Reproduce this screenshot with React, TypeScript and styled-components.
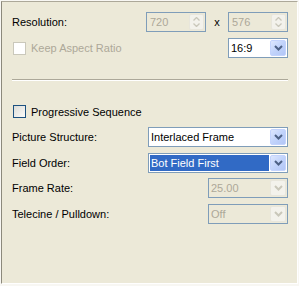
import React from 'react';
import styled, {createGlobalStyle} from 'styled-components';

const GlobalStyle = createGlobalStyle`
    html, body {
        margin: 0;
        padding: 0;
        background: #f8f7f3;
    }
    body {
        font-family: "Liberation Sans", Arial, sans-serif;
        font-size: 11px;
        color: #000;
    }
`

const Chevron = ({color}: {color: string}) => (
    <svg width="9" height="6" viewBox="0 0 9 6">
        <path d="M1 1 L4.5 4.5 L8 1" fill="none" stroke={color} strokeWidth="2"/>
    </svg>
)

const SpinArrow = ({up}: {up?: boolean}) => (
    <svg width="7" height="4" viewBox="0 0 7 4">
        <path d={up ? 'M0.5 3.5 L3.5 0.5 L6.5 3.5' : 'M0.5 0.5 L3.5 3.5 L6.5 0.5'} fill="none" stroke="#c9c7ba" strokeWidth="1.3"/>
    </svg>
)

type ComboProps = {
    value: string
    width: number
    disabled?: boolean
    selected?: boolean
}

const Combo = ({value, width, disabled, selected}: ComboProps) => (
    <StyledCombo $width={width} $disabled={disabled}>
        <ComboText $disabled={disabled} $selected={selected}>{value}</ComboText>
        <ComboButton $disabled={disabled}>
            <Chevron color={disabled ? '#c9c7ba' : '#4d6185'}/>
        </ComboButton>
    </StyledCombo>
)

const SpinBox = ({value}: {value: string}) => (
    <StyledSpin>
        <SpinText>{value}</SpinText>
        <SpinButtons>
            <SpinArrow up/>
            <SpinArrow/>
        </SpinButtons>
    </StyledSpin>
)

const App = () => {
    return (
        <>
            <GlobalStyle/>
            <Panel>
                <Row>
                    <Label>Resolution:</Label>
                    <SizeGroup>
                        <SpinBox value={'720'}/>
                        <Times>x</Times>
                        <SpinBox value={'576'}/>
                    </SizeGroup>
                </Row>
                <Row $top={6}>
                    <CheckLabel $disabled>
                        <CheckBox $disabled/>
                        Keep Aspect Ratio
                    </CheckLabel>
                    <Combo value={'16:9'} width={60}/>
                </Row>
                <Separator/>
                <CheckRow>
                    <CheckLabel>
                        <CheckBox/>
                        Progressive Sequence
                    </CheckLabel>
                </CheckRow>
                <Fields>
                    <Row>
                        <Label>Picture Structure:</Label>
                        <Combo value={'Interlaced Frame'} width={140}/>
                    </Row>
                    <Row>
                        <Label>Field Order:</Label>
                        <Combo value={'Bot Field First'} width={140} selected/>
                    </Row>
                    <Row>
                        <Label>Frame Rate:</Label>
                        <Combo value={'25.00'} width={80} disabled/>
                    </Row>
                    <Row>
                        <Label>Telecine / Pulldown:</Label>
                        <Combo value={'Off'} width={80} disabled/>
                    </Row>
                </Fields>
            </Panel>
        </>
    );
};

export default App;

const Panel = styled.div`
    box-sizing: border-box;
    margin: 1px 0 0 1px;
    width: 297px;
    height: 283px;
    background: #ece9d8;
    border-top: 1px solid #aca899;
    border-left: 1px solid #8c897c;
    border-right: 1px solid #fff;
    border-bottom: 1px solid #fff;
    padding: 10px 9px 0 10px;
`

const Row = styled.div<{$top?: number}>`
    display: flex;
    align-items: center;
    justify-content: space-between;
    height: 20px;
    margin-top: ${p => p.$top ?? 0}px;
`

const Label = styled.span`
    white-space: nowrap;
`

const SizeGroup = styled.div`
    display: flex;
    align-items: center;
`

const Times = styled.span`
    width: 22px;
    text-align: center;
    color: #000;
`

const CheckRow = styled.div`
    display: flex;
    align-items: center;
    height: 13px;
    margin-top: 24px;
`

const CheckLabel = styled.label<{$disabled?: boolean}>`
    display: flex;
    align-items: center;
    gap: 5px;
    padding-left: 1px;
    color: ${p => p.$disabled ? '#aca899' : '#000'};
`

const CheckBox = styled.span<{$disabled?: boolean}>`
    box-sizing: border-box;
    width: 13px;
    height: 13px;
    border: 1px solid ${p => p.$disabled ? '#cac8bb' : '#1c5180'};
    background: ${p => p.$disabled ? '#fff' : 'linear-gradient(135deg, #dcdcd7, #fbfbf9)'};
`

const Separator = styled.div`
    margin-top: 21px;
    border-top: 1px solid #aca899;
    border-bottom: 1px solid #fff;
`

const Fields = styled.div`
    display: flex;
    flex-direction: column;
    gap: 5.67px;
    margin-top: 9px;
`

const StyledCombo = styled.div<{$width: number, $disabled?: boolean}>`
    box-sizing: border-box;
    display: flex;
    width: ${p => p.$width}px;
    height: 20px;
    padding: 1px;
    border: 1px solid #7f9db9;
    background: ${p => p.$disabled ? '#ece9d8' : '#fff'};
`

const ComboText = styled.div<{$disabled?: boolean, $selected?: boolean}>`
    flex: 1;
    display: flex;
    align-items: center;
    padding-left: 1px;
    margin-right: 1px;
    white-space: nowrap;
    color: ${p => p.$selected ? '#fff' : p.$disabled ? '#aca899' : '#000'};
    background: ${p => p.$selected ? '#316ac5' : 'transparent'};
`

const ComboButton = styled.div<{$disabled?: boolean}>`
    box-sizing: border-box;
    width: 16px;
    display: flex;
    align-items: center;
    justify-content: center;
    border-radius: 2px;
    border: 1px solid ${p => p.$disabled ? '#e8e6dc' : '#c3d3fd'};
    background: ${p => p.$disabled
        ? '#f3f2ec'
        : 'linear-gradient(135deg, #dde7fe 0%, #c1d3fb 50%, #b2c6f6 100%)'};
`

const StyledSpin = styled.div`
    box-sizing: border-box;
    display: flex;
    width: 60px;
    height: 20px;
    padding: 1px;
    border: 1px solid #7f9db9;
    background: #ece9d8;
`

const SpinText = styled.div`
    flex: 1;
    display: flex;
    align-items: center;
    padding-left: 2px;
    color: #aca899;
`

const SpinButtons = styled.div`
    box-sizing: border-box;
    width: 15px;
    display: flex;
    flex-direction: column;
    align-items: center;
    justify-content: space-evenly;
    border: 1px solid #e8e6dc;
    border-radius: 2px;
    background: #f3f2ec;
`
